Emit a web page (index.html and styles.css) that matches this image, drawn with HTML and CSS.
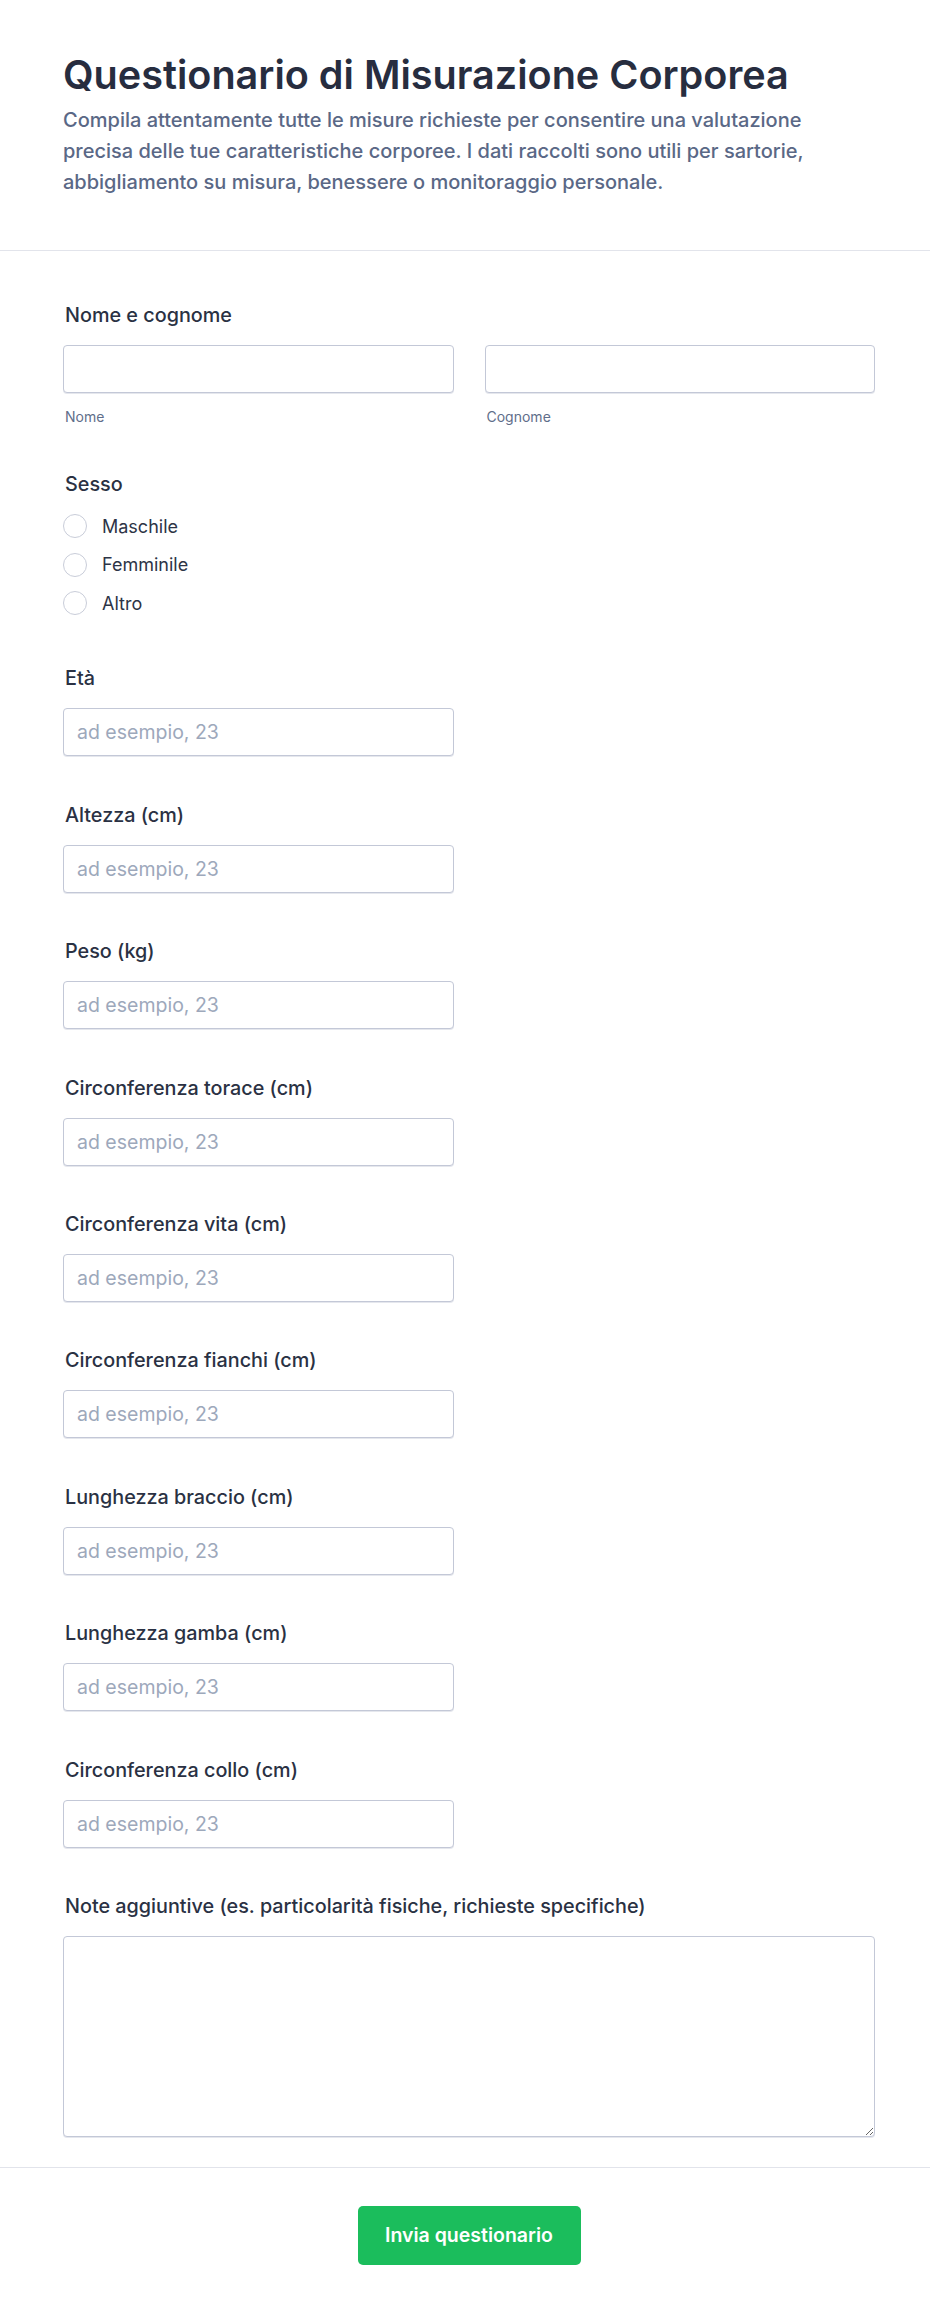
FILE: index.html
```html
<!DOCTYPE html>
<html lang="it">
<head>
<meta charset="utf-8">
<title>Questionario di Misurazione Corporea</title>
<link rel="stylesheet" href="styles.css">
</head>
<body>
<header class="header">
  <h1 class="title">Questionario di Misurazione Corporea</h1>
  <p class="desc">Compila attentamente tutte le misure richieste per consentire una valutazione precisa delle tue caratteristiche corporee. I dati raccolti sono utili per sartorie, abbigliamento su misura, benessere o monitoraggio personale.</p>
</header>
<form class="form">
  <div class="field">
    <div class="label">Nome e cognome</div>
    <div class="name-row">
      <div class="name-col">
        <input class="input" type="text">
        <div class="sublabel">Nome</div>
      </div>
      <div class="name-col">
        <input class="input" type="text">
        <div class="sublabel">Cognome</div>
      </div>
    </div>
  </div>
  <div class="field field-sesso">
    <div class="label">Sesso</div>
    <div class="radios">
      <label class="radio"><span class="circle"></span>Maschile</label>
      <label class="radio"><span class="circle"></span>Femminile</label>
      <label class="radio"><span class="circle"></span>Altro</label>
    </div>
  </div>
  <div class="field"><div class="label">Età</div><input class="input half" type="text" placeholder="ad esempio, 23"></div>
  <div class="field"><div class="label">Altezza (cm)</div><input class="input half" type="text" placeholder="ad esempio, 23"></div>
  <div class="field"><div class="label">Peso (kg)</div><input class="input half" type="text" placeholder="ad esempio, 23"></div>
  <div class="field"><div class="label">Circonferenza torace (cm)</div><input class="input half" type="text" placeholder="ad esempio, 23"></div>
  <div class="field"><div class="label">Circonferenza vita (cm)</div><input class="input half" type="text" placeholder="ad esempio, 23"></div>
  <div class="field"><div class="label">Circonferenza fianchi (cm)</div><input class="input half" type="text" placeholder="ad esempio, 23"></div>
  <div class="field"><div class="label">Lunghezza braccio (cm)</div><input class="input half" type="text" placeholder="ad esempio, 23"></div>
  <div class="field"><div class="label">Lunghezza gamba (cm)</div><input class="input half" type="text" placeholder="ad esempio, 23"></div>
  <div class="field"><div class="label">Circonferenza collo (cm)</div><input class="input half" type="text" placeholder="ad esempio, 23"></div>
  <div class="field field-last"><div class="label">Note aggiuntive (es. particolarità fisiche, richieste specifiche)</div><textarea class="textarea"></textarea></div>
</form>
<div class="footer">
  <button class="submit" type="button">Invia questionario</button>
</div>
</body>
</html>
```

FILE: styles.css
```css
* { box-sizing: border-box; }
body {
  margin: 0;
  font-family: Inter, "Noto Sans", sans-serif;
  background: #ffffff;
  color: #2a3143;
}
.header {
  padding: 51px 55px 52px 63px;
  border-bottom: 1px solid #e2e4eb;
}
.title {
  margin: 0;
  font-size: 39.6px;
  line-height: 48px;
  font-weight: 600;
  color: #272d3f;
}
.desc {
  margin: 6px 0 0;
  max-width: 760px;
  font-size: 20px;
  line-height: 31px;
  font-weight: 500;
  color: #5a6886;
}
.form {
  padding: 52px 55px 30px 63px;
  border-bottom: 1px solid #e2e4eb;
  display: flex;
  flex-direction: column;
  gap: 46.4px;
}
.field { display: flex; flex-direction: column; }
.label {
  font-size: 19.8px;
  line-height: 24px;
  font-weight: 500;
  color: #2a3143;
  padding-left: 2px;
  margin-bottom: 18px;
}
.name-row {
  display: grid;
  grid-template-columns: 1fr 1fr;
  column-gap: 31px;
}
.name-col { display: flex; flex-direction: column; }
.sublabel {
  margin-top: 15px;
  padding-left: 2px;
  font-size: 14px;
  line-height: 18px;
  color: #5f6e8a;
}
.input {
  height: 48px;
  width: 100%;
  border: 1px solid #c3c8d7;
  border-radius: 4px;
  padding: 0 13px;
  font-family: Inter, "Noto Sans", sans-serif;
  font-size: 19.5px;
  color: #2a3143;
  background: #fff;
  box-shadow: 0 1px 0 rgba(180, 186, 204, 0.35);
}
.input.half { width: calc((100% - 31px) / 2); }
.input::placeholder { color: #9da8bb; }
.field-sesso .label { margin-bottom: 18px; }
.radios { display: flex; flex-direction: column; gap: 14.5px; }
.radio {
  display: flex;
  align-items: center;
  height: 24px;
  font-size: 18px;
  color: #2d3446;
}
.circle {
  width: 24px;
  height: 24px;
  border-radius: 50%;
  border: 1.5px solid #c9cdd9;
  background: #fff;
  margin-right: 15px;
  flex: none;
}
.field-sesso + .field { margin-top: 4.6px; }
.textarea {
  height: 201px;
  width: 100%;
  border: 1px solid #c3c8d7;
  border-radius: 4px;
  padding: 12px 13px;
  font-family: Inter, "Noto Sans", sans-serif;
  font-size: 19.5px;
  resize: vertical;
  box-shadow: 0 1px 0 rgba(180, 186, 204, 0.35);
}
.footer {
  display: flex;
  justify-content: center;
  padding: 38px 55px 50px 63px;
}
.submit {
  height: 59px;
  width: 223px;
  border: 0;
  border-radius: 5px;
  background: #1bbd5c;
  color: #ffffff;
  font-family: Inter, "Noto Sans", sans-serif;
  font-size: 19.5px;
  font-weight: 600;
}
```
